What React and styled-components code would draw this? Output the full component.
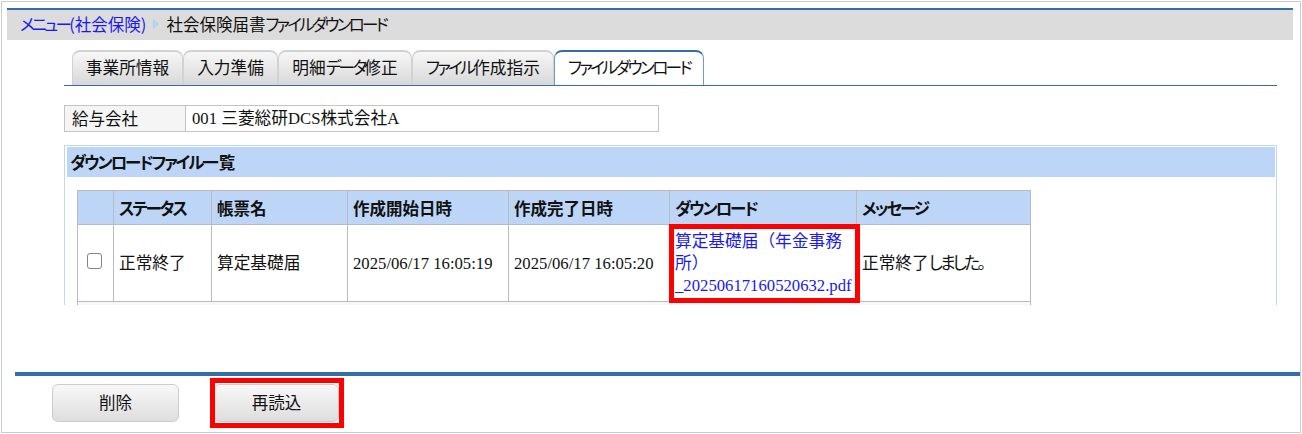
import React from 'react'
import styled, { createGlobalStyle } from 'styled-components'

const Global = createGlobalStyle`
  html, body { margin: 0; padding: 0; background: #fff; }
  body {
    font-family: "Liberation Serif", "Noto Sans CJK JP", serif;
    font-size: 16.7px;
    color: #111;
  }
`

const columns = [36, 98, 136, 161, 161, 187, 174]
const heads = ['', 'ステータス', '帳票名', '作成開始日時', '作成完了日時', 'ダウンロード', 'メッセージ']
const tabs = [
  { label: '事業所情報', width: 111 },
  { label: '入力準備', width: 95 },
  { label: '明細データ修正', width: 134 },
  { label: 'ファイル作成指示', width: 142 },
  { label: 'ファイルダウンロード', width: 150, active: true },
]

// the kana in the original font are much narrower than the kanji
const Text = ({ children, bold }) => {
  const Run = bold ? BoldKana : Kana
  return children.split(/([ぁ-んァ-ヶー。]+)/).map((part, i) =>
    i % 2 ? <Run key={i}>{part}</Run> : part
  )
}

const App = () => {
  return (
    <>
      <Global />
      <Frame>
        <Crumbs>
          <CrumbLink href="#"><Text>メニュー(社会保険)</Text></CrumbLink>
          <CrumbArrow />
          <span><Text>社会保険届書ファイルダウンロード</Text></span>
        </Crumbs>

        <Content>
          <TabBar>
            {tabs.map((t) => (
              <Tab key={t.label} $active={t.active} $width={t.width}><Text>{t.label}</Text></Tab>
            ))}
          </TabBar>

          <CompanyRow>
            <CompanyLabel>給与会社</CompanyLabel>
            <CompanyValue>001 三菱総研DCS株式会社A</CompanyValue>
          </CompanyRow>

          <Panel>
            <PanelTitle><Text bold>ダウンロードファイル一覧</Text></PanelTitle>
            <FileTable>
              <colgroup>
                {columns.map((w, i) => <col key={i} width={w} />)}
              </colgroup>
              <thead>
                <tr>
                  {heads.map((h, i) => <HeadCell key={i}><Text bold>{h}</Text></HeadCell>)}
                </tr>
              </thead>
              <tbody>
                <tr>
                  <CheckCell><Check type="checkbox" /></CheckCell>
                  <Cell>正常終了</Cell>
                  <Cell>算定基礎届</Cell>
                  <DateCell>2025/06/17 16:05:19</DateCell>
                  <DateCell>2025/06/17 16:05:20</DateCell>
                  <LinkCell>
                    <FileLink href="#">算定基礎届（年金事務<br />所）<br />_20250617160520632.pdf</FileLink>
                    <CellMark />
                  </LinkCell>
                  <Cell><Text>正常終了しました。</Text></Cell>
                </tr>
                <NextRow>
                  <td colSpan={7} />
                </NextRow>
              </tbody>
            </FileTable>
          </Panel>
        </Content>

        <Footer>
          <Button>削除</Button>
          <MarkedButton>
            <Button $width={125}>再読込</Button>
          </MarkedButton>
        </Footer>
      </Frame>
    </>
  )
}

export default App

const Kana = styled.span`
  font-family: "Noto Sans CJK JP", sans-serif;
  font-feature-settings: "palt";
  letter-spacing: -0.16em;
`

const BoldKana = styled(Kana)`
  letter-spacing: -0.125em;
`

const Frame = styled.div`
  box-sizing: border-box;
  width: 1300px;
  height: 432px;
  margin: 1px;
  border: 1px solid #ccc;
  padding-top: 6px;
  overflow: hidden;
`

const Crumbs = styled.div`
  box-sizing: border-box;
  display: flex;
  align-items: center;
  height: 32px;
  margin-left: 5px;
  width: 1286px;
  padding: 0 0 3px 13px;
  background: #dcdcdc;
  border-top: 2px solid #336ea8;
  font-family: "Noto Sans CJK JP", sans-serif;
  font-size: 16.5px;
  color: #111;
`

const CrumbLink = styled.a`
  color: #1a1aee;
  text-decoration: none;
`

const CrumbArrow = styled.span`
  width: 0;
  height: 0;
  margin: 0 7px 0 7px;
  border-left: 6px solid #b3d1f2;
  border-top: 5px solid transparent;
  border-bottom: 5px solid transparent;
`

const Content = styled.div`
  margin-left: 62px;
  width: 1213px;
`

const TabBar = styled.div`
  display: flex;
  box-sizing: border-box;
  height: 36px;
  margin-top: 10px;
  padding-left: 8px;
  border-bottom: 1px solid #336ea8;
`

const Tab = styled.div`
  box-sizing: border-box;
  width: ${(p) => p.$width}px;
  height: 35px;
  display: flex;
  align-items: center;
  justify-content: center;
  padding-bottom: 3px;
  font-family: "Noto Sans CJK JP", sans-serif;
  white-space: pre;
  border-radius: 8px 8px 0 0;
  border: 1px solid ${(p) => (p.$active ? '#6f9cc9' : '#d2d2d2')};
  border-top: ${(p) => (p.$active ? '2px solid #336ea8' : '2px solid #d2d2d2')};
  border-bottom: 0;
  background: ${(p) => (p.$active ? '#fff' : 'linear-gradient(#f7f7f7, #d8d8d8)')};
`

const CompanyRow = styled.div`
  display: flex;
  box-sizing: border-box;
  width: 595px;
  height: 27px;
  margin-top: 19px;
  border: 1px solid #c4c4c4;
  line-height: 25px;
`

const CompanyLabel = styled.div`
  box-sizing: border-box;
  width: 121px;
  padding-left: 7px;
  background: #f5f5f5;
  border-right: 1px solid #c4c4c4;
  font-family: "Noto Sans CJK JP", sans-serif;
  font-size: 16.5px;
`

const CompanyValue = styled.div`
  padding-left: 6px;
`

const Panel = styled.div`
  box-sizing: border-box;
  height: 160px;
  margin-top: 13px;
  padding: 1px 1px 0 2px;
  border: 1px solid #bdd7f7;
  border-bottom: 0;
  overflow: hidden;
`

const PanelTitle = styled.div`
  height: 30px;
  padding-left: 3px;
  background: #bdd6f7;
  font-weight: 700;
  line-height: 30px;
  font-family: "Noto Sans CJK JP", sans-serif;
  font-size: 16.5px;
`

const FileTable = styled.table`
  table-layout: fixed;
  width: 953px;
  margin: 13px 0 0 10px;
  border-collapse: collapse;
`

const HeadCell = styled.th`
  height: 33px;
  padding: 0 5px;
  background: #bdd6f7;
  border: 1px solid #bbb;
  text-align: left;
  font-family: "Noto Sans CJK JP", sans-serif;
  font-size: 16.5px;
`

const Cell = styled.td`
  box-sizing: border-box;
  height: 77px;
  padding: 0 5px 3px;
  border: 1px solid #bbb;
`

const DateCell = styled(Cell)`
  padding: 1px 5px 0;
`

const CheckCell = styled(Cell)`
  padding: 0 3px 6px 0;
  text-align: center;
`

const Check = styled.input`
  appearance: none;
  box-sizing: border-box;
  display: inline-block;
  width: 15px;
  height: 16px;
  margin: 0;
  vertical-align: middle;
  background: #fff;
  border: 1.5px solid #858585;
  border-radius: 3px;
`

const LinkCell = styled(Cell)`
  position: relative;
  padding: 2px 5px 0;
  line-height: 22px;
`

const FileLink = styled.a`
  color: #1a1aee;
  text-decoration: none;
`

const CellMark = styled.span`
  position: absolute;
  inset: -1px -4px -2px -1px;
  border: 5px solid #f00;
`

const NextRow = styled.tr`
  td {
    height: 30px;
    border: 1px solid #bbb;
    background: #f7f8fe;
  }
`

const Footer = styled.div`
  display: flex;
  align-items: flex-start;
  gap: 35px;
  box-sizing: border-box;
  height: 57px;
  margin: 67px 0 0 13px;
  padding: 8px 0 0 37px;
  border-top: 4px solid #336ea8;
`

const Button = styled.button`
  box-sizing: border-box;
  width: ${(p) => p.$width || 127}px;
  height: 38px;
  padding: 0 0 2px;
  border: 1px solid #ccc;
  border-radius: 6px;
  background: linear-gradient(#f8f8f8, #dedede);
  color: #111;
  font-family: "Noto Sans CJK JP", sans-serif;
  font-size: 16.5px;
`

const MarkedButton = styled.div`
  position: relative;
  &::after {
    content: "";
    position: absolute;
    inset: -6px -5px -6px -4px;
    border: 5px solid #f00;
    pointer-events: none;
  }
`
